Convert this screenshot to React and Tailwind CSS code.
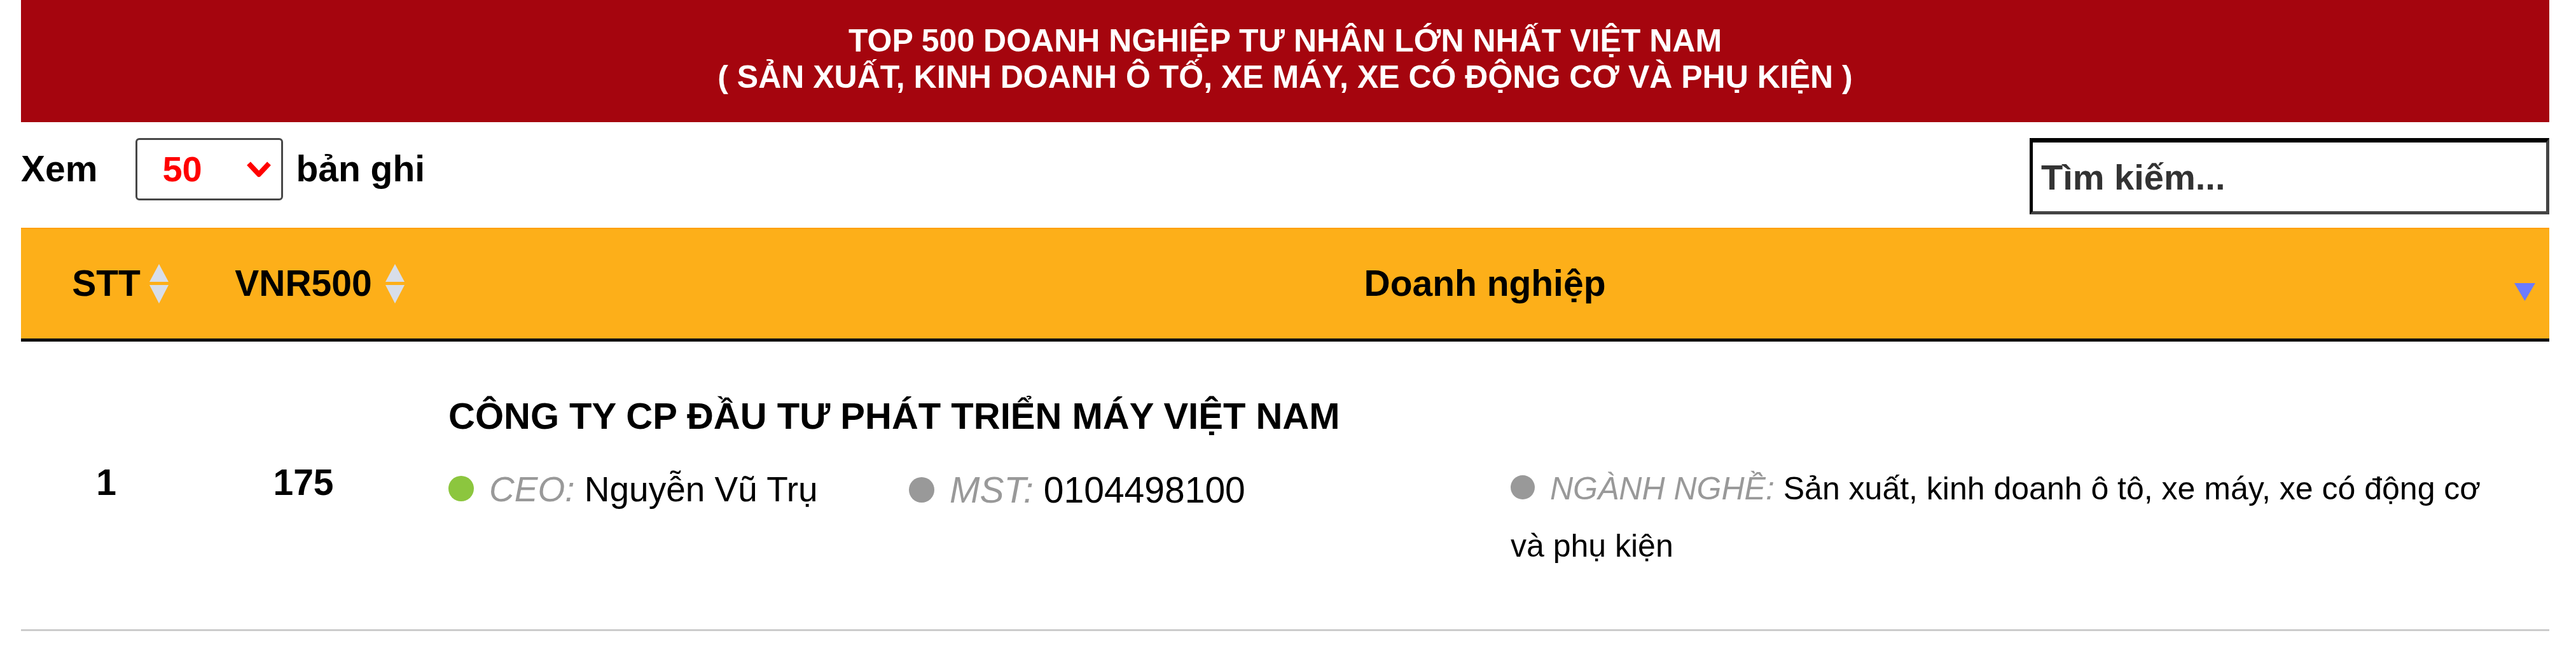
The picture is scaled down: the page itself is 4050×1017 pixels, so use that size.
const SortArrows = ({ gap }) => (
  <svg
    className={`absolute top-1/2 left-full -translate-y-1/2 ${gap}`}
    width="30"
    height="62"
    viewBox="0 0 30 62"
  >
    <polygon points="15,0 30,28 0,28" fill="#d8dee9" />
    <polygon points="0,33 30,33 15,62" fill="#d8dee9" />
  </svg>
);

const Dot = ({ color, size }) => (
  <span className={`inline-block rounded-full align-baseline ${color} ${size}`} />
);

const App = () => {
  return (
    <div className="min-h-screen bg-white pl-[33px] pr-[42px] font-['Liberation_Sans',Arial,sans-serif] text-black">
      {/* banner */}
      <div className="h-[192px] bg-[#a5050e] pt-[36px] text-center text-[50px] font-bold leading-[57px] text-white">
        <div>TOP 500 DOANH NGHIỆP TƯ NHÂN LỚN NHẤT VIỆT NAM</div>
        <div>( SẢN XUẤT, KINH DOANH Ô TỐ, XE MÁY, XE CÓ ĐỘNG CƠ VÀ PHỤ KIỆN )</div>
      </div>

      {/* controls */}
      <div className="flex items-start justify-between pt-[25px]">
        <div className="flex h-[98px] items-center text-[57px] font-bold leading-[1.15]">
          <span>Xem</span>
          <div className="ml-[60px] flex h-[98px] w-[232px] items-center justify-between rounded-[6px] border-[3px] border-[#474747] pl-[39px] pr-[15px]">
            <span className="text-[56px] text-[#ff0000]">50</span>
            <svg width="40" height="26" viewBox="0 0 40 26">
              <polyline
                points="4,4 20,21 36,4"
                fill="none"
                stroke="#ff0000"
                strokeWidth="8"
                strokeLinejoin="round"
              />
            </svg>
          </div>
          <span className="ml-[20px]">bản ghi</span>
        </div>
        <input
          type="text"
          placeholder="Tìm kiếm..."
          className="h-[120px] w-[817px] border-[5px] border-t-[7px] border-black border-r-[#444] border-b-[#444] bg-white pl-[13px] text-[56px] font-bold outline-none placeholder:text-[#333]"
        />
      </div>

      {/* table head */}
      <div className="relative mt-[21px] flex h-[179px] border-t-2 border-b-[5px] border-t-[#ff9f00] border-b-[#111] bg-[#fdaf19] text-[57px] font-bold leading-[1.15]">
        <div className="flex w-[268px] items-center justify-center">
          <span className="relative">
            STT
            <SortArrows gap="ml-[14px]" />
          </span>
        </div>
        <div className="flex w-[352px] items-center justify-center">
          <span className="relative">
            VNR500
            <SortArrows gap="ml-[21px]" />
          </span>
        </div>
        <div className="flex flex-1 items-center justify-center pl-[8px]">
          <span>Doanh nghiệp</span>
        </div>
        <svg
          className="absolute top-[85px] right-[22px]"
          width="33"
          height="28"
          viewBox="0 0 33 28"
        >
          <polygon points="0,0 33,0 16.5,28" fill="#6b7bff" />
        </svg>
      </div>

      {/* row */}
      <div className="flex border-b-[3px] border-[#cccccc]">
        <div className="flex w-[268px] items-center justify-center pb-[8px] text-[57px] font-bold leading-[1.15]">
          1
        </div>
        <div className="flex w-[352px] items-center justify-center pb-[8px] text-[57px] font-bold leading-[1.15]">
          175
        </div>
        <div className="flex-1 pt-[84px] pr-[65px] pb-[86px] pl-[52px]">
          <div className="text-[58px] font-bold leading-[1.15]">
            CÔNG TY CP ĐẦU TƯ PHÁT TRIỂN MÁY VIỆT NAM
          </div>
          <div className="mt-[35px] flex items-start">
            <div className="mt-[15px] w-[724px] text-[55px] leading-[1.15]">
              <Dot color="bg-[#8cc63e]" size="h-[40px] w-[40px]" />
              <span className="ml-[24px] italic text-[#999]">CEO:</span>{" "}
              <span>Nguyễn Vũ Trụ</span>
            </div>
            <div className="mt-[15px] w-[946px] text-[57px] leading-[1.15]">
              <Dot color="bg-[#999]" size="h-[40px] w-[40px]" />
              <span className="ml-[24px] italic text-[#999]">MST:</span>{" "}
              <span>0104498100</span>
            </div>
            <div className="flex-1 text-[50px] leading-[90px]">
              <Dot color="bg-[#999]" size="h-[38px] w-[38px]" />
              <span className="ml-[24px] italic text-[#999]">NGÀNH NGHỀ:</span>{" "}
              <span>Sản xuất, kinh doanh ô tô, xe máy, xe có động cơ và phụ kiện</span>
            </div>
          </div>
        </div>
      </div>
    </div>
  );
};

export default App;
